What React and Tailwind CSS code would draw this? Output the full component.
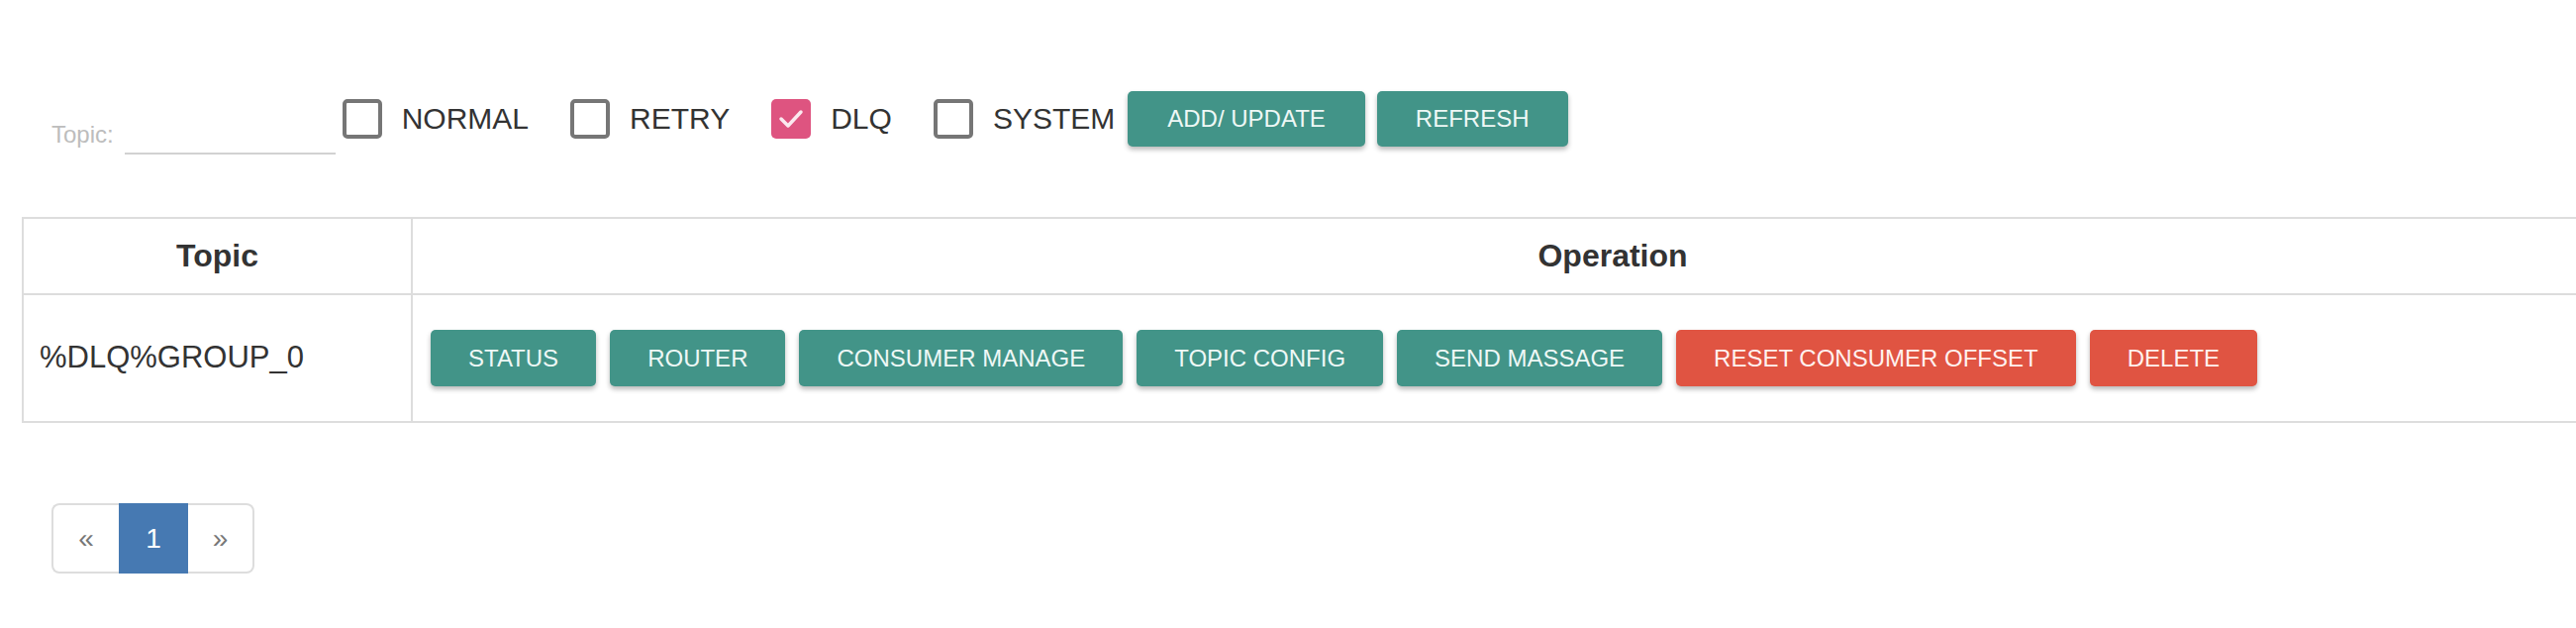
import { useState } from "react";

const filters = [
  { key: "NORMAL", checked: false },
  { key: "RETRY", checked: false },
  { key: "DLQ", checked: true },
  { key: "SYSTEM", checked: false },
];

const ops = [
  { label: "STATUS", danger: false },
  { label: "ROUTER", danger: false },
  { label: "CONSUMER MANAGE", danger: false },
  { label: "TOPIC CONFIG", danger: false },
  { label: "SEND MASSAGE", danger: false },
  { label: "RESET CONSUMER OFFSET", danger: true },
  { label: "DELETE", danger: true },
];

function Checkbox({ label, checked, onToggle, last }) {
  return (
    <label
      onClick={onToggle}
      className={`flex items-center gap-[20px] cursor-pointer ${last ? "mr-[13px]" : "mr-[42px]"}`}
    >
      {checked ? (
        <span className="w-[40px] h-[40px] rounded-[5px] bg-[#de5480] flex items-center justify-center">
          <svg width="40" height="40" viewBox="0 0 40 40">
            <polyline
              points="10,20 17,27 30,13"
              fill="none"
              stroke="#fbe9ef"
              strokeWidth="3.5"
              strokeLinecap="round"
              strokeLinejoin="round"
            />
          </svg>
        </span>
      ) : (
        <span className="w-[40px] h-[40px] rounded-[5px] border-[4px] border-[#767676] bg-white" />
      )}
      <span className="text-[30px] leading-none text-[#333]">{label}</span>
    </label>
  );
}

export default function App() {
  const [checked, setChecked] = useState(
    Object.fromEntries(filters.map((f) => [f.key, f.checked]))
  );
  const [topic, setTopic] = useState("");

  return (
    <div
      className="w-full overflow-hidden bg-white min-h-screen"
      style={{ fontFamily: '"Liberation Sans", Arial, sans-serif' }}
    >
      {/* toolbar */}
      <div className="pt-[84px] pl-[52px] flex items-center h-[156px]">
        <div className="h-[72px] flex items-end mr-[7px]">
          <span className="text-[24px] leading-none text-[#bdbdbd] pb-[8px] mr-[11px]">Topic:</span>
          <input
            value={topic}
            onChange={(e) => setTopic(e.target.value)}
            className="w-[213px] h-[40px] border-b-2 border-[#d2d2d2] outline-none text-[24px]"
          />
        </div>
        {filters.map((f, i) => (
          <Checkbox
            key={f.key}
            label={f.key}
            checked={checked[f.key]}
            last={i === filters.length - 1}
            onToggle={() => setChecked((p) => ({ ...p, [f.key]: !p[f.key] }))}
          />
        ))}
        <div className="flex gap-[12px]">
          <button className="h-[56px] px-[40px] rounded-[5px] bg-[#429488] text-[#eef8f6] text-[24px] shadow-[0_3px_5px_rgba(0,0,0,0.28)]">
            ADD/ UPDATE
          </button>
          <button className="h-[56px] px-[39px] rounded-[5px] bg-[#429488] text-[#eef8f6] text-[24px] shadow-[0_3px_5px_rgba(0,0,0,0.28)]">
            REFRESH
          </button>
        </div>
      </div>

      {/* table */}
      <table className="ml-[22px] mt-[63px] w-[2821px] border-collapse border-2 border-[#dddddd] text-[#333]">
        <thead>
          <tr>
            <th className="w-[393px] border-2 border-[#dddddd] py-[15px] text-[32px] leading-[45px] font-bold text-center">
              Topic
            </th>
            <th className="border-2 border-[#dddddd] py-[15px] text-[32px] leading-[45px] font-bold text-center">
              Operation
            </th>
          </tr>
        </thead>
        <tbody>
          <tr>
            <td className="h-[129px] border-2 border-[#dddddd] px-[16px] text-[31px] align-middle">
              %DLQ%GROUP_0
            </td>
            <td className="h-[129px] border-2 border-[#dddddd] pl-[18px] align-middle">
              <div className="flex items-center gap-[14px]">
                {ops.map((o) => (
                  <button
                    key={o.label}
                    className={`h-[57px] px-[38px] rounded-[5px] text-[24px] shadow-[0_3px_5px_rgba(0,0,0,0.28)] ${
                      o.danger ? "bg-[#e05442] text-[#fff1ef]" : "bg-[#429488] text-[#eef8f6]"
                    }`}
                  >
                    {o.label}
                  </button>
                ))}
              </div>
            </td>
          </tr>
        </tbody>
      </table>

      {/* pagination */}
      <div className="ml-[52px] mt-[81px] flex h-[71px] text-[28px]">
        <span className="w-[68px] flex items-center justify-center border-2 border-r-0 border-[#dddddd] rounded-l-[8px] text-[#777]">
          «
        </span>
        <span className="w-[70px] flex items-center justify-center border-2 border-[#4679b2] bg-[#4679b2] text-white">
          1
        </span>
        <span className="w-[67px] flex items-center justify-center border-2 border-l-0 border-[#dddddd] rounded-r-[8px] text-[#777]">
          »
        </span>
      </div>
    </div>
  );
}
